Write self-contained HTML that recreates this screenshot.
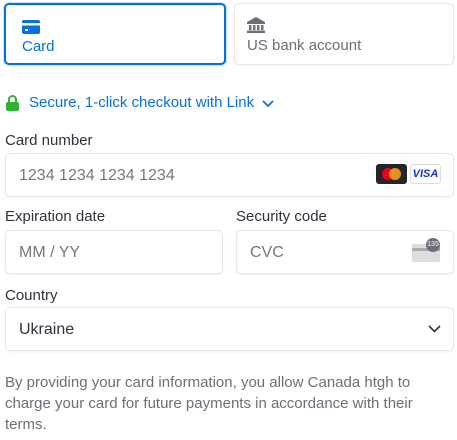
<!DOCTYPE html>
<html><head><style>
*{box-sizing:border-box}
body{margin:0;width:457px;height:440px;background:#fff;font-family:"Liberation Sans",sans-serif;color:#30313d;position:relative;overflow:hidden}
.a{position:absolute}
.tab{position:absolute;top:3px;height:62px;border:1px solid #e6e6e6;border-radius:5px;box-shadow:0 1px 2px rgba(0,0,0,.05)}
.inp{position:absolute;height:44px;border:1px solid #e6e6e6;border-radius:5px;box-shadow:0 1px 2px rgba(0,0,0,.06);font-size:16px;color:#777;padding:13px 0 0 13px}
.lbl{position:absolute;font-size:15px;color:#30313d}
</style></head><body>
<div class="tab" style="left:4px;width:222px;border:2px solid #0570de;box-shadow:0 0 0 1px rgba(5,112,222,.2)">
 <svg class="a" style="left:16px;top:15px" width="18" height="14"><rect x="0" y="0" width="18" height="14" rx="2" fill="#0570de"/><rect x="0" y="3" width="18" height="2.5" fill="#fff"/><rect x="3" y="9" width="3" height="2" fill="#fff"/></svg>
 <div class="a" style="left:16px;top:33px;font-size:15px;color:#0570de">Card</div>
</div>
<div class="tab" style="left:234px;width:220px">
 <svg class="a" style="left:12px;top:13px" width="18" height="16" fill="#6d6e78"><path d="M9 0L0 5v2h18V5z"/><rect x="2" y="8" width="2.5" height="5"/><rect x="6" y="8" width="2.5" height="5"/><rect x="10" y="8" width="2.5" height="5"/><rect x="14" y="8" width="2.5" height="5"/><rect x="0" y="13.5" width="18" height="2.5"/></svg>
 <div class="a" style="left:12px;top:33px;font-size:15px;color:#6d6e78">US bank account</div>
</div>
<svg class="a" style="left:6px;top:95px" width="13" height="16"><path d="M3 7V4.5a3.5 3.5 0 017 0V7" stroke="#30b130" stroke-width="2" fill="none"/><rect x="0" y="7" width="13" height="9" rx="2" fill="#30b130"/></svg>
<div class="a" style="left:29px;top:94px;font-size:15px;color:#0570de">Secure, 1-click checkout with Link</div>
<svg class="a" style="left:262px;top:100px" width="12" height="8"><path d="M1 1l5 5 5-5" stroke="#0570de" stroke-width="1.8" fill="none"/></svg>
<div class="lbl" style="left:5px;top:132px">Card number</div>
<div class="inp" style="left:5px;top:153px;width:449px">1234 1234 1234 1234</div>
<div class="a" style="left:376px;top:164px;width:31px;height:20px;background:#252525;border-radius:3px"></div>
<div class="a" style="left:382px;top:168px;width:12px;height:12px;border-radius:50%;background:#eb001b"></div>
<div class="a" style="left:389px;top:168px;width:12px;height:12px;border-radius:50%;background:#f79e1b;opacity:.9"></div>
<div class="a" style="left:410px;top:164px;width:31px;height:20px;border:1px solid #ddd;border-radius:3px;font:italic bold 11px 'Liberation Sans',sans-serif;color:#1434cb;text-align:center;line-height:18px">VISA</div>
<div class="lbl" style="left:5px;top:208px">Expiration date</div>
<div class="inp" style="left:5px;top:230px;width:218px">MM / YY</div>
<div class="lbl" style="left:236px;top:208px">Security code</div>
<div class="inp" style="left:236px;top:230px;width:218px">CVC</div>
<div class="a" style="left:412px;top:244px;width:28px;height:18px;background:#ddd;border-radius:2px"></div>
<div class="a" style="left:412px;top:248px;width:28px;height:3px;background:#aaa"></div>
<div class="a" style="left:426px;top:238px;width:14px;height:14px;border-radius:50%;background:#6d6e78;color:#fff;font-size:7px;text-align:center;line-height:14px">135</div>
<div class="lbl" style="left:5px;top:287px">Country</div>
<div class="inp" style="left:5px;top:307px;width:449px;color:#30313d">Ukraine</div>
<svg class="a" style="left:428px;top:325px" width="13" height="8"><path d="M1 1l5.5 5.5L12 1" stroke="#30313d" stroke-width="1.6" fill="none"/></svg>
<div class="a" style="left:5px;top:372px;width:440px;font-size:15px;line-height:21px;color:#6d6e78">By providing your card information, you allow Canada htgh to charge your card for future payments in accordance with their terms.</div>
</body></html>
